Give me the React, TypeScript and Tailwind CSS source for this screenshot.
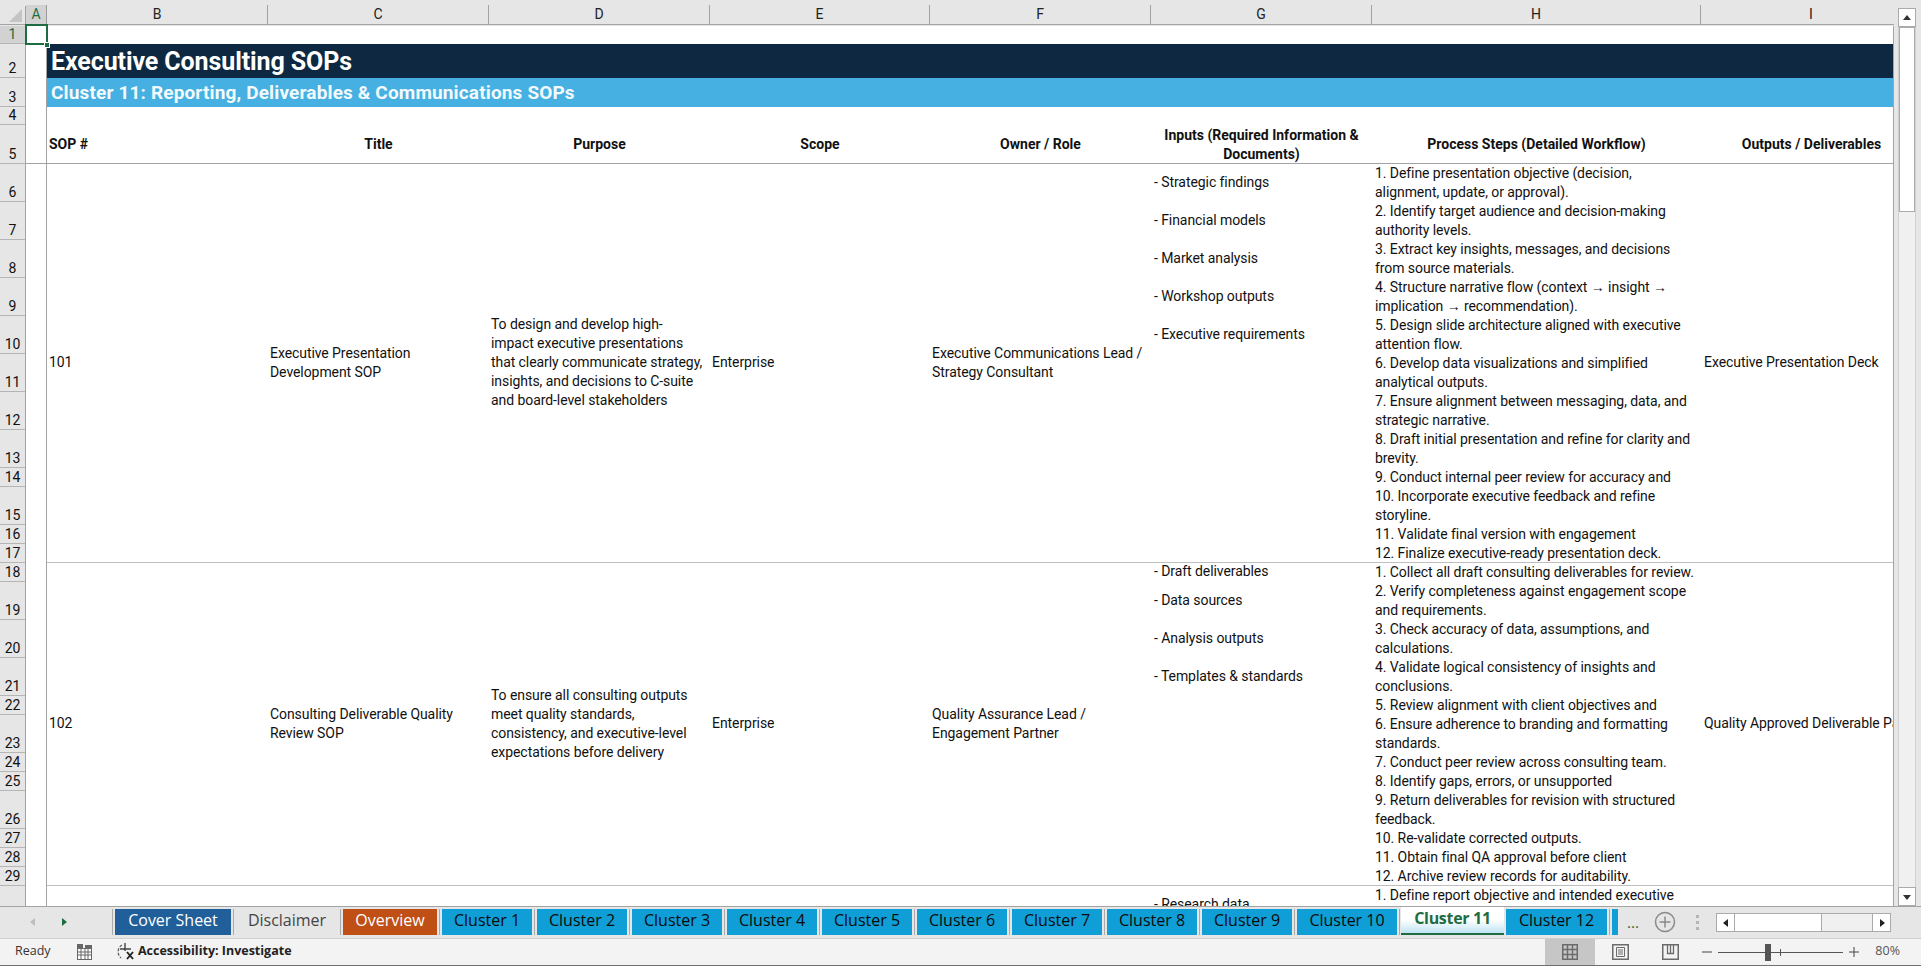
import type { ReactNode } from "react";

const body = "font-['Roboto','Liberation_Sans',sans-serif]";
const ui = "font-['Open_Sans',sans-serif]";

const columns = ["B", "C", "D", "E", "F", "G", "H", "I"];

const rowHeights = [
  "h-[18px]", "h-[34px]", "h-[29px]", "h-[18px]", "h-[39px]",
  "h-[38px]", "h-[38px]", "h-[38px]", "h-[38px]", "h-[38px]", "h-[38px]", "h-[38px]", "h-[38px]",
  "h-[19px]", "h-[38px]", "h-[19px]", "h-[19px]", "h-[19px]",
  "h-[38px]", "h-[38px]", "h-[38px]", "h-[19px]", "h-[38px]", "h-[19px]", "h-[19px]", "h-[38px]",
  "h-[19px]", "h-[19px]", "h-[19px]", "h-[38px]",
];

const steps101 = `1. Define presentation objective (decision,
alignment, update, or approval).
2. Identify target audience and decision-making
authority levels.
3. Extract key insights, messages, and decisions
from source materials.
4. Structure narrative flow (context → insight →
implication → recommendation).
5. Design slide architecture aligned with executive
attention flow.
6. Develop data visualizations and simplified
analytical outputs.
7. Ensure alignment between messaging, data, and
strategic narrative.
8. Draft initial presentation and refine for clarity and
brevity.
9. Conduct internal peer review for accuracy and
10. Incorporate executive feedback and refine
storyline.
11. Validate final version with engagement
12. Finalize executive-ready presentation deck.`;

const steps102 = `1. Collect all draft consulting deliverables for review.
2. Verify completeness against engagement scope
and requirements.
3. Check accuracy of data, assumptions, and
calculations.
4. Validate logical consistency of insights and
conclusions.
5. Review alignment with client objectives and
6. Ensure adherence to branding and formatting
standards.
7. Conduct peer review across consulting team.
8. Identify gaps, errors, or unsupported
9. Return deliverables for revision with structured
feedback.
10. Re-validate corrected outputs.
11. Obtain final QA approval before client
12. Archive review records for auditability.`;

function Cell({ className, children }: { className: string; children: ReactNode }) {
  return <div className={`${className} flex items-center pb-[2px] pl-[2px] whitespace-pre tracking-[-0.07px]`}>{children}</div>;
}

function Head({ className, children }: { className: string; children: ReactNode }) {
  return <div className={`${className} row-start-5 font-bold flex items-center justify-center text-center`}>{children}</div>;
}

function Tab({ label, width, bg, text = "text-[#0b0b0b]" }: { label: string; width: string; bg: string; text?: string }) {
  return (
    <>
      <div className={`${width} ${bg} ${text} h-[26px] pb-[4px] flex items-center justify-center text-[16px] shrink-0`}>{label}</div>
      <div className="w-px h-[26px] bg-[#ababab] mx-[2px] shrink-0" />
    </>
  );
}

function Arrow({ dir, color }: { dir: "left" | "right" | "up" | "down"; color: string }) {
  const pts = { left: "7,1 2,5 7,9", right: "3,1 8,5 3,9", up: "1,7 5,2 9,7", down: "1,3 5,8 9,3" }[dir];
  return (
    <svg width="10" height="10" viewBox="0 0 10 10">
      <polygon points={pts} fill={color} />
    </svg>
  );
}

export default function App() {
  return (
    <div className={`w-[1921px] h-[966px] overflow-hidden flex flex-col bg-[#e6e6e6] text-[14px] leading-[19px] text-[#111] ${body}`}>
      <div className="flex h-[906px] shrink-0">
        <div className="w-[1894px] flex flex-col relative">
          {/* column headers */}
          <div className="h-[26px] pt-[6px] shrink-0 flex overflow-hidden">
            <div className="w-[26px] h-[19px] shrink-0 border-r border-b border-[#a3a3a3] relative overflow-hidden">
              <svg className="absolute right-[3px] bottom-[2px]" width="13" height="13" viewBox="0 0 13 13">
                <polygon points="13,0 13,13 0,13" fill="#c4c4c4" />
              </svg>
            </div>
            <div className="w-[21px] h-[20px] shrink-0 -mt-px bg-[#d2d2d2] border-r border-b border-[#9b9b9b] flex items-center justify-center text-[#1e6c41]">A</div>
            <div className="grid grid-cols-[221px_221px_221px_220px_221px_221px_329px_221px] shrink-0">
              {columns.map((c) => (
                <div key={c} className="h-[20px] -mt-px border-r border-b border-[#a3a3a3] flex items-center justify-center text-[#222]">
                  {c}
                </div>
              ))}
            </div>
          </div>

          <div className="flex h-[880px] overflow-hidden border-r border-[#a3a3a3] bg-white">
            {/* row headers */}
            <div className="w-[26px] shrink-0 bg-[#e6e6e6] border-r border-[#a3a3a3]">
              {rowHeights.map((h, i) => (
                <div
                  key={i}
                  className={`${h} ${i === 0 ? "bg-[#d2d2d2] text-[#1e6c41]" : ""} border-b border-[#b5b5b5] leading-[17px] flex items-end justify-center`}
                >
                  {i + 1}
                </div>
              ))}
            </div>

            {/* sheet */}
            <div className="shrink-0 grid grid-cols-[21px_221px_221px_221px_220px_221px_221px_329px_221px] grid-rows-[18px_34px_29px_18px_39px_repeat(8,38px)_19px_38px_19px_19px_19px_repeat(3,38px)_19px_38px_19px_19px_38px_19px_19px_19px_38px]">
              <div className="col-start-1 row-start-1 row-span-30 border-r border-[#a3a3a3]" />

              <div className="col-start-2 col-span-8 row-start-2 bg-[#0e2841] text-white font-bold text-[25px] leading-[34px] pl-[4px] pt-[1px] tracking-[-0.1px]">Executive Consulting SOPs</div>
              <div className="col-start-2 col-span-8 row-start-3 bg-[#45b0e1] text-[#f2fafd] font-bold text-[19px] leading-[29px] pl-[4px] tracking-[0.15px]">Cluster 11: Reporting, Deliverables &amp; Communications SOPs</div>

              <div className="col-start-1 col-span-9 row-start-5 border-b border-[#a3a3a3]" />
              <div className="col-start-2 row-start-5 font-bold flex items-center pl-[2px]">SOP #</div>
              <Head className="col-start-3">Title</Head>
              <Head className="col-start-4">Purpose</Head>
              <Head className="col-start-5">Scope</Head>
              <Head className="col-start-6">Owner / Role</Head>
              <Head className="col-start-7">Inputs (Required Information &amp;<br />Documents)</Head>
              <Head className="col-start-8">Process Steps (Detailed Workflow)</Head>
              <Head className="col-start-9">Outputs / Deliverables</Head>

              {/* SOP 101 */}
              <div className="col-start-2 col-span-8 row-start-6 row-span-12 border-b border-[#bfbfbf]" />
              <Cell className="col-start-2 row-start-6 row-span-12">101</Cell>
              <Cell className="col-start-3 row-start-6 row-span-12">{"Executive Presentation\nDevelopment SOP"}</Cell>
              <Cell className="col-start-4 row-start-6 row-span-12">{"To design and develop high-\nimpact executive presentations\nthat clearly communicate strategy,\ninsights, and decisions to C-suite\nand board-level stakeholders"}</Cell>
              <Cell className="col-start-5 row-start-6 row-span-12">Enterprise</Cell>
              <Cell className="col-start-6 row-start-6 row-span-12">{"Executive Communications Lead /\nStrategy Consultant"}</Cell>
              <Cell className="col-start-7 row-start-6 ml-px">- Strategic findings</Cell>
              <Cell className="col-start-7 row-start-7 ml-px">- Financial models</Cell>
              <Cell className="col-start-7 row-start-8 ml-px">- Market analysis</Cell>
              <Cell className="col-start-7 row-start-9 ml-px">- Workshop outputs</Cell>
              <Cell className="col-start-7 row-start-10 ml-px">- Executive requirements</Cell>
              <div className="col-start-8 row-start-6 row-span-12 pl-[3px] whitespace-pre tracking-[-0.07px]">{steps101}</div>
              <Cell className="col-start-9 row-start-6 row-span-12 ml-px">Executive Presentation Deck</Cell>

              {/* SOP 102 */}
              <div className="col-start-2 col-span-8 row-start-18 row-span-12 border-b border-[#bfbfbf]" />
              <Cell className="col-start-2 row-start-18 row-span-12">102</Cell>
              <Cell className="col-start-3 row-start-18 row-span-12">{"Consulting Deliverable Quality\nReview SOP"}</Cell>
              <Cell className="col-start-4 row-start-18 row-span-12">{"To ensure all consulting outputs\nmeet quality standards,\nconsistency, and executive-level\nexpectations before delivery"}</Cell>
              <Cell className="col-start-5 row-start-18 row-span-12">Enterprise</Cell>
              <Cell className="col-start-6 row-start-18 row-span-12">{"Quality Assurance Lead /\nEngagement Partner"}</Cell>
              <Cell className="col-start-7 row-start-18 ml-px">- Draft deliverables</Cell>
              <Cell className="col-start-7 row-start-19 ml-px">- Data sources</Cell>
              <Cell className="col-start-7 row-start-20 ml-px">- Analysis outputs</Cell>
              <Cell className="col-start-7 row-start-21 ml-px">- Templates &amp; standards</Cell>
              <div className="col-start-8 row-start-18 row-span-12 pl-[3px] whitespace-pre tracking-[-0.07px]">{steps102}</div>
              <Cell className="col-start-9 row-start-18 row-span-12 ml-px">Quality Approved Deliverable Pack</Cell>

              {/* SOP 103, cut off by the tab bar */}
              <Cell className="col-start-7 row-start-30 ml-px">- Research data</Cell>
              <div className="col-start-8 row-start-30 pl-[3px] whitespace-pre tracking-[-0.07px]">1. Define report objective and intended executive</div>
            </div>
          </div>

          {/* active cell */}
          <div className="absolute left-[25px] top-[24px] w-[23px] h-[21px] border-2 border-[#1e6c41]" />
          <div className="absolute left-[44px] top-[42px] w-[6px] h-[6px] bg-[#1e6c41] border border-white" />
        </div>

        {/* vertical scrollbar */}
        <div className="w-[27px] pt-[8px] pl-[4px] flex flex-col">
          <div className="w-[18px] h-[19px] bg-white border border-[#ababab] flex items-center justify-center"><Arrow dir="up" color="#333" /></div>
          <div className="w-[18px] flex-1 bg-[#f0f0f0] border-x border-[#d0d0d0] flex flex-col">
            <div className="h-[185px] bg-white border border-[#ababab]" />
          </div>
          <div className="w-[18px] h-[19px] bg-white border border-[#ababab] flex items-center justify-center"><Arrow dir="down" color="#333" /></div>
        </div>
      </div>

      {/* sheet tabs */}
      <div className={`h-[33px] shrink-0 border-t border-b border-[#a3a3a3] border-b-[#cfcfcf] pt-[2px] flex items-start ${ui}`}>
        <div className="w-[112px] h-[26px] flex items-center shrink-0">
          <div className="ml-[28px]"><Arrow dir="left" color="#bdbdbd" /></div>
          <div className="ml-[21px]"><Arrow dir="right" color="#1e6c41" /></div>
        </div>
        <div className="w-px h-[26px] bg-[#ababab] mr-[2px] shrink-0" />
        <Tab label="Cover Sheet" width="w-[116px]" bg="bg-[#215f9a]" text="text-white" />
        <Tab label="Disclaimer" width="w-[102px]" bg="bg-[#e6e6e6]" text="text-[#444]" />
        <Tab label="Overview" width="w-[94px]" bg="bg-[#c04f15]" text="text-white" />
        <Tab label="Cluster 1" width="w-[90px]" bg="bg-[#0f9ed5]" />
        <Tab label="Cluster 2" width="w-[90px]" bg="bg-[#0f9ed5]" />
        <Tab label="Cluster 3" width="w-[90px]" bg="bg-[#0f9ed5]" />
        <Tab label="Cluster 4" width="w-[90px]" bg="bg-[#0f9ed5]" />
        <Tab label="Cluster 5" width="w-[90px]" bg="bg-[#0f9ed5]" />
        <Tab label="Cluster 6" width="w-[90px]" bg="bg-[#0f9ed5]" />
        <Tab label="Cluster 7" width="w-[90px]" bg="bg-[#0f9ed5]" />
        <Tab label="Cluster 8" width="w-[90px]" bg="bg-[#0f9ed5]" />
        <Tab label="Cluster 9" width="w-[90px]" bg="bg-[#0f9ed5]" />
        <Tab label="Cluster 10" width="w-[100px]" bg="bg-[#0f9ed5]" />
        <div className="w-[103px] h-[28px] -mt-[2px] -ml-px mr-[2px] pb-[3px] shrink-0 flex items-center justify-center font-bold text-[16px] tracking-[-0.3px] text-[#1e6c41] bg-gradient-to-b from-white via-white to-[#bfe3f3] border-b-2 border-[#1e6c41]">Cluster 11</div>
        <Tab label="Cluster 12" width="w-[101px]" bg="bg-[#0f9ed5]" />
        <div className="w-[6px] h-[26px] bg-[#0f9ed5] shrink-0" />
        <div className="w-[30px] h-[26px] flex items-center justify-center text-[#1e6c41] shrink-0 text-[15px]">...</div>
        <svg width="22" height="22" viewBox="0 0 22 22" className="ml-[6px] mt-[2px] shrink-0">
          <circle cx="11" cy="11" r="9.5" fill="none" stroke="#8a8a8a" strokeWidth="1.5" />
          <path d="M11 5.5v11M5.5 11h11" stroke="#8a8a8a" strokeWidth="1.5" />
        </svg>
        <div className="ml-[20px] w-[3px] h-[26px] flex flex-col justify-center gap-[3px] shrink-0">
          <span className="h-[3px] bg-[#b5b5b5]" />
          <span className="h-[3px] bg-[#b5b5b5]" />
          <span className="h-[3px] bg-[#b5b5b5]" />
        </div>
        <div className="ml-[17px] mt-[4px] w-[175px] h-[19px] flex shrink-0 border border-[#ababab]">
          <div className="w-[18px] bg-white border-r border-[#ababab] flex items-center justify-center"><Arrow dir="left" color="#222" /></div>
          <div className="w-[87px] bg-white border-r border-[#ababab]" />
          <div className="flex-1 bg-[#f0f0f0]" />
          <div className="w-[18px] bg-white border-l border-[#ababab] flex items-center justify-center"><Arrow dir="right" color="#222" /></div>
        </div>
      </div>

      {/* status bar */}
      <div className={`h-[27px] shrink-0 bg-[#f3f3f3] border-b border-[#6f6f6f] flex items-center text-[12.5px] text-[#333] ${ui}`}>
        <span className="ml-[15px] w-[61px] pb-[3px]">Ready</span>
        <svg width="15" height="16" viewBox="0 0 15 16" className="ml-px shrink-0">
          <rect x="0.5" y="4.5" width="14" height="11" fill="#fff" stroke="#666" />
          <rect x="0" y="0" width="6" height="5" fill="#666" />
          <rect x="8" y="1" width="7" height="3" fill="#666" />
          <path d="M1 8h13M1 11h13M4 5v10M8 5v10M11 5v10" stroke="#666" />
        </svg>
        <svg width="20" height="20" viewBox="0 0 20 20" className="ml-[23px] shrink-0">
          <path d="M7 3a8 8 0 0 0-1 13" fill="none" stroke="#555" strokeWidth="1.2" strokeDasharray="3 1.5" />
          <path d="M10 1v8M5 7h11" fill="none" stroke="#444" strokeWidth="1.4" />
          <path d="M12 10l6 7M18 10l-6 7" stroke="#222" strokeWidth="1.9" />
        </svg>
        <span className="ml-[3px] pb-[3px] font-bold text-[#222]">Accessibility: Investigate</span>
        <div className="ml-auto flex items-center h-[26px]">
          <div className="w-[50px] h-full bg-[#c6c6c6] flex items-center justify-center">
            <svg width="16" height="16" viewBox="0 0 16 16">
              <rect x="0.75" y="0.75" width="14.5" height="14.5" fill="none" stroke="#6b6b6b" strokeWidth="1.5" />
              <path d="M5.5 1v14M10.5 1v14M1 5.5h14M1 10.5h14" stroke="#6b6b6b" strokeWidth="1.5" />
            </svg>
          </div>
          <div className="w-[50px] h-full flex items-center justify-center">
            <svg width="17" height="16" viewBox="0 0 17 16">
              <rect x="0.75" y="0.75" width="15.5" height="14.5" fill="none" stroke="#6b6b6b" strokeWidth="1.5" />
              <path d="M4.5 3.5h8v9h-8zM6 6h5M6 8h5M6 10h5" fill="none" stroke="#6b6b6b" />
            </svg>
          </div>
          <div className="w-[50px] h-full flex items-center justify-center">
            <svg width="17" height="16" viewBox="0 0 17 16">
              <rect x="0.75" y="0.75" width="15.5" height="14.5" fill="none" stroke="#6b6b6b" strokeWidth="1.5" />
              <path d="M5.5 1v8.5h6V1M8.5 1v8.5" fill="none" stroke="#6b6b6b" strokeWidth="1.3" />
            </svg>
          </div>
          <svg width="10" height="10" viewBox="0 0 10 10" className="ml-[7px]"><path d="M0 5h10" stroke="#444" /></svg>
          <div className="ml-[6px] w-[125px] h-px bg-[#555] relative">
            <div className="absolute left-[47px] -top-[8px] w-[6px] h-[17px] bg-[#555]" />
            <div className="absolute left-[62px] -top-[3px] w-px h-[7px] bg-[#555]" />
          </div>
          <svg width="10" height="10" viewBox="0 0 10 10" className="ml-[6px]"><path d="M0 5h10M5 0v10" stroke="#444" /></svg>
          <span className="ml-[16px] mr-[21px] pb-[3px] text-[#555]">80%</span>
        </div>
      </div>
    </div>
  );
}
